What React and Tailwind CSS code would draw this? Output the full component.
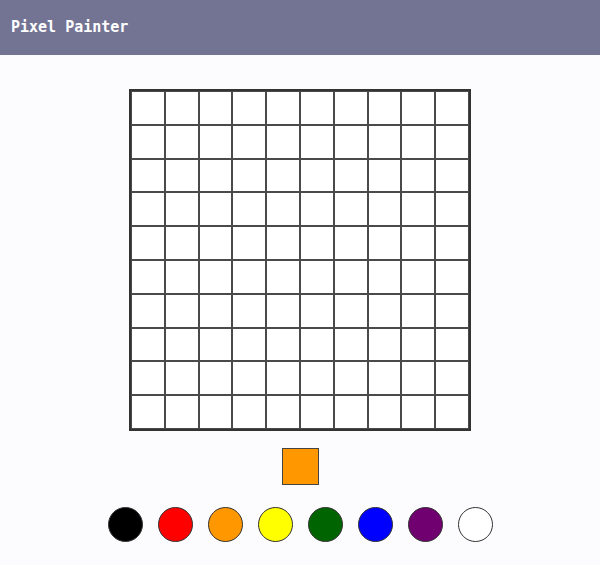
import { useState } from "react";

const COLORS = [
  "#000000",
  "#ff0000",
  "#ff9800",
  "#ffff00",
  "#006400",
  "#0000ff",
  "#700070",
  "#ffffff",
];

export default function App() {
  const [current, setCurrent] = useState("#ff9800");
  const [pixels, setPixels] = useState(Array(100).fill("#ffffff"));

  const paint = (i) => {
    const next = [...pixels];
    next[i] = current;
    setPixels(next);
  };

  return (
    <div className="min-h-[565px] bg-[#fcfbfd] font-['DejaVu_Sans_Mono',monospace]">
      {/* Header */}
      <header className="h-[55px] flex items-center px-[11px] bg-[#737494]">
        <h1 className="text-[15px] font-bold text-white">Pixel Painter</h1>
      </header>

      <div className="flex flex-col items-center pt-[34px]">
        {/* Canvas */}
        <div className="w-[342px] h-[342px] grid grid-cols-10 grid-rows-10 border-2 border-[#333333] bg-white">
          {pixels.map((color, i) => (
            <div
              key={i}
              onClick={() => paint(i)}
              className="border border-[#4a4a4a]"
              style={{ backgroundColor: color }}
            />
          ))}
        </div>

        {/* Current colour */}
        <div
          className="mt-[17px] w-[37px] h-[37px] border border-[#444444]"
          style={{ backgroundColor: current }}
        />

        {/* Palette */}
        <div className="mt-[22px] flex gap-[15px]">
          {COLORS.map((c) => (
            <button
              key={c}
              onClick={() => setCurrent(c)}
              className="w-[35px] h-[35px] rounded-full border border-[#333333]"
              style={{ backgroundColor: c }}
            />
          ))}
        </div>
      </div>
    </div>
  );
}
